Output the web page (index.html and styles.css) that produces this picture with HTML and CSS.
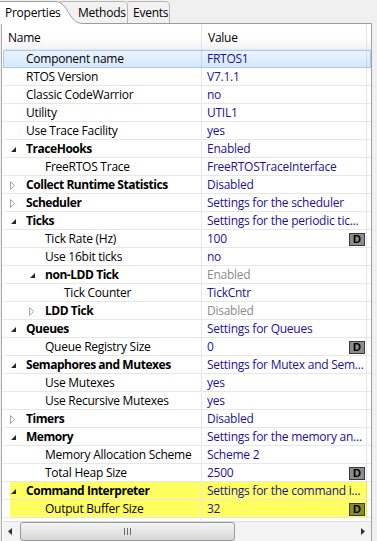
FILE: index.html
```html
<!DOCTYPE html>
<html>
<head>
<meta charset="utf-8">
<link rel="stylesheet" href="styles.css">
</head>
<body>
<div class="tabstrip">
  <svg class="tabshape" width="377" height="24" viewBox="0 0 377 24">
    <path d="M127.5 23.5 V6 C127.5 3 126 1.5 123 1.5 H60 V23.5" fill="#f2f2f2" stroke="#b5b5b5"/>
    <path d="M169.5 23.5 V6 C169.5 3 168 1.5 165 1.5 H127.5" fill="#f2f2f2" stroke="#b5b5b5"/>
    <path d="M0 25 V1.5 H54 C61 1.5 64 5 67 10 C71 17 75 23.5 83 23.5 V25 Z" fill="#fff"/>
    <path d="M0 1.5 H54 C61 1.5 64 5 67 10 C71 17 75 23.5 83 23.5 H371.5 V24" fill="none" stroke="#9c9c9c"/>
  </svg>
  <span class="tab t1">Properties</span><span class="tab t2">Methods</span><span class="tab t3">Events</span>
</div>
<div class="panel">
  <div class="header"><div class="hc hn">Name</div><div class="hc hv">Value</div><div></div></div>
  <div class="rows">
    <div class="row sel"><div class="nc l0"><span class="tw"></span>Component name</div><div class="vc"><span class="tx">FRTOS1</span></div><div></div></div>
    <div class="row"><div class="nc l0"><span class="tw"></span>RTOS Version</div><div class="vc"><span class="tx">V7.1.1</span></div><div></div></div>
    <div class="row"><div class="nc l0"><span class="tw"></span>Classic CodeWarrior</div><div class="vc"><span class="tx">no</span></div><div></div></div>
    <div class="row"><div class="nc l0"><span class="tw"></span>Utility</div><div class="vc"><span class="tx">UTIL1</span></div><div></div></div>
    <div class="row"><div class="nc l0"><span class="tw"></span>Use Trace Facility</div><div class="vc"><span class="tx">yes</span></div><div></div></div>
    <div class="row"><div class="nc l0 g"><span class="tw"><svg class="ae" width="5" height="5" viewBox="0 0 5 5"><path d="M5 0 V5 H0 Z" fill="#262626"/></svg></span>TraceHooks</div><div class="vc"><span class="tx">Enabled</span></div><div></div></div>
    <div class="row"><div class="nc l1"><span class="tw"></span>FreeRTOS Trace</div><div class="vc"><span class="tx">FreeRTOSTraceInterface</span></div><div></div></div>
    <div class="row"><div class="nc l0 g"><span class="tw"><svg class="ac" width="5" height="9" viewBox="0 0 5 9"><path d="M0.5 0.5 L4.5 4.5 L0.5 8.5 Z" fill="none" stroke="#a6a6a6"/></svg></span>Collect Runtime Statistics</div><div class="vc"><span class="tx">Disabled</span></div><div></div></div>
    <div class="row"><div class="nc l0 g"><span class="tw"><svg class="ac" width="5" height="9" viewBox="0 0 5 9"><path d="M0.5 0.5 L4.5 4.5 L0.5 8.5 Z" fill="none" stroke="#a6a6a6"/></svg></span>Scheduler</div><div class="vc"><span class="tx">Settings for the scheduler</span></div><div></div></div>
    <div class="row"><div class="nc l0 g"><span class="tw"><svg class="ae" width="5" height="5" viewBox="0 0 5 5"><path d="M5 0 V5 H0 Z" fill="#262626"/></svg></span>Ticks</div><div class="vc"><span class="tx">Settings for the periodic tic...</span></div><div></div></div>
    <div class="row"><div class="nc l1"><span class="tw"></span>Tick Rate (Hz)</div><div class="vc"><span class="tx">100</span><span class="d">D</span></div><div></div></div>
    <div class="row"><div class="nc l1"><span class="tw"></span>Use 16bit ticks</div><div class="vc"><span class="tx">no</span></div><div></div></div>
    <div class="row"><div class="nc l1 g"><span class="tw"><svg class="ae" width="5" height="5" viewBox="0 0 5 5"><path d="M5 0 V5 H0 Z" fill="#262626"/></svg></span>non-LDD Tick</div><div class="vc dis"><span class="tx">Enabled</span></div><div></div></div>
    <div class="row"><div class="nc l2"><span class="tw"></span>Tick Counter</div><div class="vc"><span class="tx">TickCntr</span></div><div></div></div>
    <div class="row"><div class="nc l1 g"><span class="tw"><svg class="ac" width="5" height="9" viewBox="0 0 5 9"><path d="M0.5 0.5 L4.5 4.5 L0.5 8.5 Z" fill="none" stroke="#a6a6a6"/></svg></span>LDD Tick</div><div class="vc dis"><span class="tx">Disabled</span></div><div></div></div>
    <div class="row"><div class="nc l0 g"><span class="tw"><svg class="ae" width="5" height="5" viewBox="0 0 5 5"><path d="M5 0 V5 H0 Z" fill="#262626"/></svg></span>Queues</div><div class="vc"><span class="tx">Settings for Queues</span></div><div></div></div>
    <div class="row"><div class="nc l1"><span class="tw"></span>Queue Registry Size</div><div class="vc"><span class="tx">0</span><span class="d">D</span></div><div></div></div>
    <div class="row"><div class="nc l0 g"><span class="tw"><svg class="ae" width="5" height="5" viewBox="0 0 5 5"><path d="M5 0 V5 H0 Z" fill="#262626"/></svg></span>Semaphores and Mutexes</div><div class="vc"><span class="tx">Settings for Mutex and Sem...</span></div><div></div></div>
    <div class="row"><div class="nc l1"><span class="tw"></span>Use Mutexes</div><div class="vc"><span class="tx">yes</span></div><div></div></div>
    <div class="row"><div class="nc l1"><span class="tw"></span>Use Recursive Mutexes</div><div class="vc"><span class="tx">yes</span></div><div></div></div>
    <div class="row"><div class="nc l0 g"><span class="tw"><svg class="ac" width="5" height="9" viewBox="0 0 5 9"><path d="M0.5 0.5 L4.5 4.5 L0.5 8.5 Z" fill="none" stroke="#a6a6a6"/></svg></span>Timers</div><div class="vc"><span class="tx">Disabled</span></div><div></div></div>
    <div class="row"><div class="nc l0 g"><span class="tw"><svg class="ae" width="5" height="5" viewBox="0 0 5 5"><path d="M5 0 V5 H0 Z" fill="#262626"/></svg></span>Memory</div><div class="vc"><span class="tx">Settings for the memory an...</span></div><div></div></div>
    <div class="row"><div class="nc l1"><span class="tw"></span>Memory Allocation Scheme</div><div class="vc"><span class="tx">Scheme 2</span></div><div></div></div>
    <div class="row"><div class="nc l1"><span class="tw"></span>Total Heap Size</div><div class="vc"><span class="tx">2500</span><span class="d">D</span></div><div></div></div>
    <div class="row hl"><div class="nc l0 g"><span class="tw"><svg class="ae" width="5" height="5" viewBox="0 0 5 5"><path d="M5 0 V5 H0 Z" fill="#262626"/></svg></span>Command Interpreter</div><div class="vc"><span class="tx">Settings for the command i...</span></div><div></div></div>
    <div class="row hl"><div class="nc l1"><span class="tw"></span>Output Buffer Size</div><div class="vc"><span class="tx">32</span><span class="d">D</span></div><div></div></div>
    <div class="row"><div class="nc l0"></div><div class="vc"></div><div></div></div>
  </div>
  <div class="hscroll">
    <div class="sbtn left"><svg width="4" height="7" viewBox="0 0 4 7"><path d="M4 0 L0 3.5 L4 7 Z" fill="#303030"/></svg></div>
    <div class="thumb"><svg width="8" height="7" viewBox="0 0 8 7"><path d="M0.5 0 V7 M3.5 0 V7 M6.5 0 V7" stroke="#6a6a6a"/></svg></div>
    <div class="track"></div>
    <div class="sbtn right"><svg width="4" height="7" viewBox="0 0 4 7"><path d="M0 0 L4 3.5 L0 7 Z" fill="#303030"/></svg></div>
  </div>
</div>
</body>
</html>
```
FILE: styles.css
```css
* { box-sizing: border-box; }
html, body { margin: 0; padding: 0; }
body {
  background: #f0f0f0;
  font-family: "Open Sans", "Noto Sans", sans-serif;
  font-size: 12px;
  letter-spacing: -0.25px;
  color: #000;
  width: 377px;
  height: 541px;
  overflow: hidden;
}
.tabstrip {
  position: relative;
  height: 24px;
  display: flex;
  align-items: center;
}
.tabshape { position: absolute; left: 0; top: 0; }
.tab { position: relative; line-height: 16px; margin-top: 2px; white-space: nowrap; }
.t1 { width: 78px; padding-left: 5px; }
.t2 { width: 55px; }
.panel {
  margin-left: 1px;
  width: 371px;
  height: 517px;
  border-left: 1px solid #a8a8a8;
  border-right: 1px solid #a0a0a0;
  background: #fff;
  overflow: hidden;
}
.header {
  display: grid;
  grid-template-columns: 199px 165px 1fr;
  height: 26px;
  margin-left: 1px;
  background: linear-gradient(#fff 0, #fff 55%, #f1f2f4 100%);
  border-bottom: 1px solid #e4e7eb;
}
.hc {
  display: flex;
  align-items: center;
  border-right: 1px solid #e3e3e3;
  padding-top: 1px;
}
.hn { padding-left: 5px; }
.hv { padding-left: 6px; }
.rows { height: 471px; overflow: hidden; }
.row {
  display: grid;
  grid-template-columns: 199px 165px 1fr;
  height: 18px;
  margin-left: 1px;
  border-bottom: 1px solid rgba(0, 0, 0, 0.095);
  line-height: 17px;
}
.row.sel {
  background: linear-gradient(#ebf4fe, #d6e8fc);
  border-bottom-color: #a9caf0;
  box-shadow: inset 0 1px #a9caf0, inset 1px 0 #a9caf0, inset -1px 0 #a9caf0;
  border-radius: 2px 2px 0 0;
}
.nc, .vc {
  display: flex;
  align-items: center;
  white-space: nowrap;
  overflow: hidden;
  border-right: 1px solid rgba(0, 0, 0, 0.095);
}
.l0 { padding-left: 1px; }
.l1 { padding-left: 20px; }
.l2 { padding-left: 39px; }
.g { font-weight: bold; letter-spacing: -0.45px; }
.tw { width: 22px; height: 17px; flex: none; display: flex; align-items: center; }
.ae { margin-left: 7px; margin-top: 2px; }
.ac { margin-left: 6px; margin-top: 2px; }
.vc { padding-left: 5px; color: #20129a; }
.vc.dis { color: #8c8c8c; }
.tx { flex: 1; overflow: hidden; }
.d {
  flex: none;
  width: 16px;
  height: 13px;
  margin: 2px 1px 0 0;
  border: 1px solid #3a3a3a;
  background: #8c8c8c;
  color: #000;
  letter-spacing: 0;
  font: bold 11px/11px "Liberation Sans", Arial, sans-serif;
  display: flex;
  align-items: center;
  justify-content: center;
}
.hl .nc { background: linear-gradient(90deg, transparent 7px, #ffff5f 7px); }
.hl .vc { background: #ffff5f; }
.hl .d { background: #8c8c2c; }
.hscroll {
  display: flex;
  height: 20px;
  margin-left: 1px;
  border-top: 1px solid #dedede;
  background: #f3f3f3;
}
.sbtn { width: 17px; flex: none; display: flex; align-items: center; }
.sbtn.left { padding-left: 5px; }
.sbtn.right { justify-content: flex-end; padding-right: 6px; }
.thumb {
  width: 215px;
  flex: none;
  border: 1px solid #999;
  border-radius: 3px;
  background: linear-gradient(#f6f6f6, #e2e2e2 60%, #d6d6d6);
  display: flex;
  align-items: center;
  justify-content: center;
}
.track { flex: 1; }
```
